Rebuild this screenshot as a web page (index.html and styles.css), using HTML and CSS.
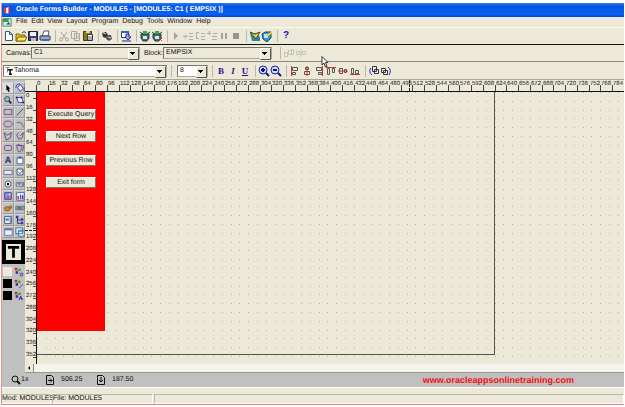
FILE: index.html
```html
<!DOCTYPE html>
<html lang="en">
<head>
    <meta charset="utf-8">
    <title>Oracle Forms Builder - MODULE5</title>
    <link rel="stylesheet" href="styles.css">
</head>
<body>
<div class="window">
    <header class="titlebar">
        <svg class="icon" viewBox="0 0 12 12"><path d="M2 4l4-2v8H3z" fill="#e33"/><path d="M5 4l3-2v8H5z" fill="#fff"/><path d="M8 2l2 3v5H8z" fill="#c22"/></svg>
        <h1>Oracle Forms Builder - MODULE5 - [MODULE5: C1 ( EMPSIX )]</h1>
    </header>

    <nav class="menubar">
        <svg class="icon" viewBox="0 0 12 12"><path d="M1 2h10v9H1z" fill="#dfe8d8" stroke="#286"/><path d="M1 2h7v4H1z" fill="#3a9a60"/><path d="M5 9l3-3 2 3z" fill="#246"/></svg>
        <a href="#">File</a>
        <a href="#">Edit</a>
        <a href="#">View</a>
        <a href="#">Layout</a>
        <a href="#">Program</a>
        <a href="#">Debug</a>
        <a href="#">Tools</a>
        <a href="#">Window</a>
        <a href="#">Help</a>
    </nav>

    <div class="toolbar main-tools">
        <button aria-label="New"><svg viewBox="0 0 12 12"><path d="M2.500 1.500h4l3 3v6h-7z" fill="#fff" stroke="#345a8c"/><path d="M6.500 1.500v3h3" fill="none" stroke="#345a8c"/></svg></button>
        <button aria-label="Open"><svg viewBox="0 0 12 12"><path d="M1 4h3l1 1h5v6H1z" fill="#e8c020" stroke="#776010"/><path d="M3 7h9l-2 4H1z" fill="#ffe860" stroke="#776010"/><path d="M7 3q2-3 4 0" fill="none" stroke="#333"/></svg></button>
        <button aria-label="Save"><svg viewBox="0 0 12 12"><path d="M1.500 1.500h9v9h-9z" fill="#3a3f80" stroke="#223"/><path d="M3 2h6v4H3z" fill="#eef"/><path d="M4 8h5v3H4z" fill="#b8bcd8"/></svg></button>
        <button aria-label="Print"><svg viewBox="0 0 12 12"><path d="M3 6l2-5h5l-1 5z" fill="#fff" stroke="#557"/><path d="M1 6h10v4H1z" fill="#9aa9cc" stroke="#345"/><path d="M3 9h7v2H3z" fill="#46c"/></svg></button>
        <span class="sep"></span>
        <button aria-label="Cut"><svg viewBox="0 0 12 12"><path d="M3 2l5 7M9 2L4 9" stroke="#aaa89c" fill="none"/><circle cx="3" cy="9.500" r="1.500" fill="none" stroke="#aaa89c"/><circle cx="9" cy="9.500" r="1.500" fill="none" stroke="#aaa89c"/></svg></button>
        <button aria-label="Copy"><svg viewBox="0 0 12 12"><path d="M1.500 1.500h5v7h-5zM4.500 3.500h5v7h-5z" fill="#eeecdf" stroke="#aaa89c"/><path d="M6 6h3M6 8h3" stroke="#aaa89c"/></svg></button>
        <button aria-label="Paste"><svg viewBox="0 0 12 12"><path d="M1.500 1.500h8v9h-8z" fill="#8c7a22" stroke="#443c10"/><path d="M4 1h4v2H4z" fill="#dd8"/><path d="M5.500 4.500h5v6h-5z" fill="#fff" stroke="#335"/><path d="M6 7h4M6 9h4" stroke="#557"/></svg></button>
        <span class="sep"></span>
        <button aria-label="Connect"><svg viewBox="0 0 12 12"><path d="M1 3l4-1 2 3-2 3-3-1z" fill="#333"/><path d="M6 5l4 0 1 4-3 2-3-2z" fill="#555"/><path d="M2 3l3 1M7 7l3 1" stroke="#ccc"/></svg></button>
        <span class="sep"></span>
        <button aria-label="Object Navigator"><svg viewBox="0 0 12 12"><path d="M1.500 1.500h7v6h-7z" fill="#fff" stroke="#247"/><path d="M1 1h8v2H1z" fill="#36a"/><path d="M6 4h3v3h2l-3 3-3-3h1z" fill="#9af" stroke="#229"/><path d="M2 11h9" stroke="#229"/></svg></button>
        <span class="sep"></span>
        <button aria-label="Run Form"><svg viewBox="0 0 12 12"><path d="M2 4h8v4l-2 3H4L2 8z" fill="#456f78" stroke="#243b44"/><path d="M1 2l3 2M11 2L8 4" stroke="#243b44"/><path d="M4 6h4v3H4z" fill="#d8e8e8"/><path d="M4 1h4v3H4z" fill="#2fae4a"/></svg></button>
        <button aria-label="Run Form Debug"><svg viewBox="0 0 12 12"><path d="M2 4h8v4l-2 3H4L2 8z" fill="#456f78" stroke="#243b44"/><path d="M1 2l3 2M11 2L8 4" stroke="#243b44"/><path d="M4 6h4v3H4z" fill="#d8e8e8"/><path d="M4 1h4v3H4z" fill="#2fae4a"/><path d="M8 8l3 3M11 8l-3 3" stroke="#d33"/></svg></button>
        <span class="sep"></span>
        <button aria-label="Go"><svg viewBox="0 0 12 12"><path d="M4 2l4 4-4 4z" fill="#a5a398"/></svg></button>
        <button aria-label="Step Into"><svg viewBox="0 0 12 12"><path d="M1 6.500h4M3 4.500l2 2-2 2M7 3.500h4M7 6.500h4M7 9.500h4" stroke="#b0aea2" fill="none"/></svg></button>
        <button aria-label="Step Over"><svg viewBox="0 0 12 12"><path d="M5 2.500H2.500v6H5M7 3.500h4M7 6.500h4M7 9.500h4" stroke="#b0aea2" fill="none"/></svg></button>
        <button aria-label="Step Out"><svg viewBox="0 0 12 12"><path d="M1 3.500h4M3.500 1v4M7 3.500h4M6 6.500h5M6 9.500h5" stroke="#b0aea2" fill="none"/></svg></button>
        <button aria-label="Pause"><svg viewBox="0 0 12 12"><path d="M3 3h2v6H3zM7 3h2v6H7z" fill="#a5a398"/></svg></button>
        <button aria-label="Stop"><svg viewBox="0 0 12 12"><path d="M3 3h6v6H3z" fill="#98968c"/></svg></button>
        <span class="sep"></span>
        <button aria-label="Layout Wizard"><svg viewBox="0 0 12 12"><path d="M1 3h6l4 4v4H3z" fill="#2a8a9a"/><path d="M1 2l5 2 5-2-4 7z" fill="#e8d030" stroke="#443"/><path d="M8 7h3v3H8z" fill="#37c"/></svg></button>
        <button aria-label="Data Block Wizard"><svg viewBox="0 0 12 12"><path d="M1 4l3-2h6v6l-4 4-4-3z" fill="#3a92c8" stroke="#146"/><path d="M3 4h4v4H3z" fill="#bdf"/><path d="M6 6l5-4" stroke="#ec3" stroke-width="2"/></svg></button>
        <span class="sep"></span>
        <button class="help" aria-label="Help">?</button>
    </div>

    <div class="toolbar canvas-bar">
        <label for="canvas">Canvas:</label>
        <span class="combo wide"><select id="canvas"><option>C1</option></select></span>
        <label for="block">Block:</label>
        <span class="combo wide"><select id="block"><option>EMPSIX</option></select></span>
        <span class="sep"></span>
        <button aria-label="Associate Prompt"><svg viewBox="0 0 12 12"><path d="M1.500 5.500h3v4h-3zM5.500 3.500h3v4h-3zM8.500 2.500h2v5h-2z" fill="none" stroke="#c4c2b5"/></svg></button>
        <button aria-label="Update Layout"><svg viewBox="0 0 12 12"><path d="M1.500 4.500h3v3h-3zM7.500 4.500h3v3h-3zM6 2v8" fill="none" stroke="#c4c2b5"/></svg></button>
    </div>

    <div class="toolbar font-bar">
        <span class="combo white font-name"><svg viewBox="0 0 12 12"><path d="M1 2h6M4 2v6M3 8h2" stroke="#777" fill="none"/><path d="M4 5h7M7.500 5v6M6 11h4" stroke="#111" stroke-width="2" fill="none"/></svg><select aria-label="Font name"><option>Tahoma</option></select></span>
        <span class="sep"></span>
        <span class="combo white font-size"><select aria-label="Font size"><option>8</option></select></span>
        <span class="sep"></span>
        <button class="letter"><b>B</b></button>
        <button class="letter"><i>I</i></button>
        <button class="letter"><u>U</u></button>
        <span class="sep"></span>
        <button aria-label="Zoom In"><svg viewBox="0 0 12 12"><circle cx="5" cy="5" r="4" fill="#cde" stroke="#22a"/><path d="M3 5h4M5 3v4" stroke="#118" stroke-width="2"/><path d="M8 8l3 3" stroke="#118" stroke-width="2"/></svg></button>
        <button aria-label="Zoom Out"><svg viewBox="0 0 12 12"><circle cx="5" cy="5" r="4" fill="#cde" stroke="#22a"/><path d="M3 5h4" stroke="#118" stroke-width="2"/><path d="M8 8l3 3" stroke="#118" stroke-width="2"/></svg></button>
        <span class="sep"></span>
        <button aria-label="Align Left"><svg viewBox="0 0 12 12"><path d="M2.500 1v10" stroke="#c33"/><path d="M3.500 2.500h5v3h-5zM3.500 7.500h3v2h-3z" fill="none" stroke="#555"/></svg></button>
        <button aria-label="Align Center"><svg viewBox="0 0 12 12"><path d="M6 1v10" stroke="#c33"/><path d="M4.500 2.500h3v2h-3zM3.500 6.500h5v3h-5z" fill="none" stroke="#744"/></svg></button>
        <button aria-label="Align Right"><svg viewBox="0 0 12 12"><path d="M9.500 1v10" stroke="#c33"/><path d="M3.500 2.500h5v3h-5zM5.500 7.500h3v2h-3z" fill="none" stroke="#555"/></svg></button>
        <button aria-label="Align Top"><svg viewBox="0 0 12 12"><path d="M1 2.500h10" stroke="#c33"/><path d="M2.500 3.500h2v6h-2zM7.500 3.500h2v4h-2z" fill="none" stroke="#555"/></svg></button>
        <button aria-label="Align Middle"><svg viewBox="0 0 12 12"><path d="M1 6h10" stroke="#c33"/><path d="M2.500 3.500h3v5h-3zM7.500 4.500h2v3h-2z" fill="none" stroke="#744"/></svg></button>
        <button aria-label="Align Bottom"><svg viewBox="0 0 12 12"><path d="M1 9.500h10" stroke="#c33"/><path d="M2.500 3.500h2v5h-2zM6.500 5.500h3v3h-3z" fill="none" stroke="#555"/></svg></button>
        <span class="sep"></span>
        <button aria-label="Bring to Front"><svg viewBox="0 0 12 12"><path d="M4.500 1.500h4v5h-4zM6.500 4.500h4v4h-4z" fill="#eee" stroke="#333"/><path d="M3 3q-3 4 1 7" fill="none" stroke="#22c"/></svg></button>
        <button aria-label="Send to Back"><svg viewBox="0 0 12 12"><path d="M1.500 3.500h4v4h-4zM3.500 5.500h4v4h-4z" fill="#eee" stroke="#333"/><path d="M8 2q4 3 1 8" fill="none" stroke="#22c"/></svg></button>
    </div>

    <main class="workspace">
        <aside class="palette">
            <div class="tools">
                <button class="active" aria-label="Select"><svg viewBox="0 0 12 12"><path d="M4 2l5 5H7l1 3-1 1-2-3-1 1z" fill="#000"/></svg></button>
                <button aria-label="Rotate"><svg viewBox="0 0 12 12"><path d="M3 5l4-3 3 5-4 3z" fill="#eef" stroke="#33b"/><path d="M1 6q0-5 5-5M11 5v5" fill="none" stroke="#33b"/></svg></button>
                <button aria-label="Magnify"><svg viewBox="0 0 12 12"><circle cx="5" cy="5" r="3" fill="#9bb" stroke="#335"/><path d="M7 7l3 3" stroke="#224" stroke-width="2"/></svg></button>
                <button aria-label="Reshape"><svg viewBox="0 0 12 12"><path d="M2 3h6l2 6H4z" fill="#eef" stroke="#33a"/><path d="M1 2h2v2H1zM7 2h2v2H7zM9 8h2v2H9z" fill="#116"/></svg></button>
                <button aria-label="Rectangle"><svg viewBox="0 0 12 12"><path d="M1.500 3h9v6h-9z" fill="none" stroke="#744080"/></svg></button>
                <button aria-label="Line"><svg viewBox="0 0 12 12"><path d="M2 10l8-8" stroke="#336" fill="none"/></svg></button>
                <button aria-label="Ellipse"><svg viewBox="0 0 12 12"><ellipse cx="6" cy="6" rx="5" ry="3.500" fill="none" stroke="#744080"/></svg></button>
                <button aria-label="Arc"><svg viewBox="0 0 12 12"><path d="M2 4q7-1 8 6" fill="none" stroke="#744080"/></svg></button>
                <button aria-label="Polygon"><svg viewBox="0 0 12 12"><path d="M1 2l4 3 5-3-1 6-5 3z" fill="none" stroke="#623a78"/></svg></button>
                <button aria-label="Polyline"><svg viewBox="0 0 12 12"><path d="M4 2L2 5l3 5 4-2 1-6-4 4" fill="none" stroke="#623a78"/></svg></button>
                <button aria-label="Rounded Rectangle"><svg viewBox="0 0 12 12"><rect x="1.500" y="3" width="9" height="6" rx="2" fill="none" stroke="#744080"/></svg></button>
                <button aria-label="Freehand"><svg viewBox="0 0 12 12"><path d="M1 3q4-2 6 0t0 6-4-1 2-5 5 0-1 7" fill="none" stroke="#623a78"/></svg></button>
                <button class="text-tool" aria-label="Text">A</button>
                <button aria-label="Text Item"><svg viewBox="0 0 12 12"><path d="M2.500 3.500h7v7h-7z" fill="#fff" stroke="#2858b0"/><path d="M4 2h4v2H4z" fill="#2858b0"/></svg></button>
                <button aria-label="Button"><svg viewBox="0 0 12 12"><path d="M1 4h10v5H1z" fill="#e8e8f4" stroke="#668"/></svg></button>
                <button aria-label="Check Box"><svg viewBox="0 0 12 12"><path d="M2.500 2.500h7v7h-7z" fill="#fff" stroke="#246"/><path d="M4 6l2 2 3-4" fill="none" stroke="#147"/></svg></button>
                <button aria-label="Radio Button"><svg viewBox="0 0 12 12"><circle cx="6" cy="6" r="3.500" fill="#fff" stroke="#357"/><circle cx="6" cy="6" r="1.500" fill="#000"/></svg></button>
                <button aria-label="Text Field"><svg viewBox="0 0 12 12"><path d="M1.500 4.500h9v4h-9z" fill="#fff" stroke="#457"/><path d="M3 6h4" stroke="#000"/><path d="M8 5h2v3H8z" fill="#679"/></svg></button>
                <button aria-label="Image Item"><svg viewBox="0 0 12 12"><path d="M2 2h8v8H2z" fill="#89e" stroke="#33a"/><path d="M3 9l3-4 3 4z" fill="#c56"/><path d="M7 3h2v2H7z" fill="#fe6"/></svg></button>
                <button aria-label="Chart Item"><svg viewBox="0 0 12 12"><path d="M2 2h9v9H2z" fill="#fff" stroke="#35a"/><path d="M3 6h2v4H3z" fill="#c33"/><path d="M6 4h1v6H6zM8 5h2v5H8z" fill="#33c"/></svg></button>
                <button aria-label="Bean Area"><svg viewBox="0 0 12 12"><ellipse cx="5" cy="7" rx="3.500" ry="2.500" fill="#d88a20" stroke="#753"/><circle cx="9" cy="5" r="1.500" fill="#d88a20" stroke="#753"/></svg></button>
                <button aria-label="Display Item"><svg viewBox="0 0 12 12"><path d="M1 4h10v4H1z" fill="#9ab" stroke="#567"/><path d="M3 6h5" stroke="#123"/></svg></button>
                <button aria-label="List Item"><svg viewBox="0 0 12 12"><path d="M2 2h8v8H2z" fill="#fff" stroke="#246"/><path d="M3 4h4v3H3z" fill="#48c"/><path d="M8 3h1v6H8z" fill="#357"/></svg></button>
                <button aria-label="Tree Item"><svg viewBox="0 0 12 12"><path d="M3 3v7h4M3 6h4" fill="none" stroke="#224"/><path d="M1 1h3v3H1zM7 4h3v3H7zM7 8h3v3H7z" fill="#33c"/></svg></button>
                <button aria-label="Tab Canvas"><svg viewBox="0 0 12 12"><path d="M2 2h9v8H2z" fill="#eef" stroke="#579"/><path d="M2 2h9v2H2z" fill="#57a"/></svg></button>
                <button aria-label="Stacked Canvas"><svg viewBox="0 0 12 12"><path d="M1 1h8v7H1zM4 4h7v7H4z" fill="#def" stroke="#369"/><path d="M4 4h7v2H4z" fill="#69b"/></svg></button>
            </div>
            <div class="preview"><svg viewBox="0 0 16 16"><path d="M2 3h12M8 3v11" fill="none" stroke="#000" stroke-width="3"/></svg></div>
            <div class="tools colours">
                <span class="swatch light"></span>
                <button aria-label="Fill Color"><svg viewBox="0 0 12 12"><path d="M1 1h3v3H1z" fill="#d22"/><path d="M5 2h3v3H5z" fill="#2a4"/><path d="M2 5h3v3H2z" fill="#22d"/><path d="M5 5h2v2H5z" fill="#ec2"/><path d="M7.500 7.500h3v3h-3z" fill="none" stroke="#539"/></svg></button>
                <span class="swatch"></span>
                <button aria-label="Line Color"><svg viewBox="0 0 12 12"><path d="M1 1h3v3H1z" fill="#d22"/><path d="M5 2h3v3H5z" fill="#2a4"/><path d="M2 5h3v3H2z" fill="#22d"/><path d="M5 5h2v2H5z" fill="#ec2"/><path d="M6 11l5-5" stroke="#539"/></svg></button>
                <span class="swatch"></span>
                <button aria-label="Text Color"><svg viewBox="0 0 12 12"><path d="M1 1h3v3H1z" fill="#d22"/><path d="M5 2h3v3H5z" fill="#2a4"/><path d="M2 5h3v3H2z" fill="#22d"/><path d="M5 5h2v2H5z" fill="#ec2"/><path d="M6 11l2-5 2 5M7 9h3" fill="none" stroke="#319"/></svg></button>
            </div>
        </aside>
        <div class="ruler-top" id="rulerTop"><i class="marker"></i></div>
        <div class="ruler-left" id="rulerLeft"><i class="marker"></i></div>
        <section class="layout-area">
            <svg class="dots">
                <defs>
                    <pattern id="grid" width="44" height="44" patternUnits="userSpaceOnUse">
                        <path d="M0 0h1M9 0h1M18 0h1M26 0h1M35 0h1M0 9h1M9 9h1M18 9h1M26 9h1M35 9h1M0 18h1M9 18h1M18 18h1M26 18h1M35 18h1M0 26h1M9 26h1M18 26h1M26 26h1M35 26h1M0 35h1M9 35h1M18 35h1M26 35h1M35 35h1" transform="translate(0 .5)" stroke="#b5b2a4"/>
                    </pattern>
                </defs>
                <rect width="100%" height="100%" fill="url(#grid)"/>
            </svg>
            <div class="form-canvas">
                <div class="red-panel">
                    <button class="execute">Execute Query</button>
                    <button class="next">Next Row</button>
                    <button class="previous">Previous Row</button>
                    <button class="exit">Exit form</button>
                </div>
            </div>
        </section>
        <div class="hscroll"><button aria-label="Scroll left"><svg viewBox="0 0 8 8"><path d="M5 2v4L3 4z" fill="#000"/></svg></button></div>
    </main>

    <div class="coords">
        <svg viewBox="0 0 10 10"><circle cx="4" cy="4" r="3" fill="none" stroke="#111"/><path d="M6 6l3 3" stroke="#111" stroke-width="2"/></svg>
        <span class="zoom">1x</span>
        <svg viewBox="0 0 10 10"><path d="M1.500.5h5l2 2v7h-7z" fill="none" stroke="#111"/><path d="M3 5.500h4M5 3.500l2 2-2 2" fill="none" stroke="#111"/></svg>
        <span class="pos">506.25</span>
        <svg viewBox="0 0 10 10"><path d="M1.500.5h5l2 2v7h-7z" fill="none" stroke="#111"/><path d="M5 2v5M3 5l2 2 2-2" fill="none" stroke="#111"/></svg>
        <span class="pos">187.50</span>
        <a class="site" href="#">www.oracleappsonlinetraining.com</a>
    </div>

    <footer class="status">
        <span class="mod">Mod: MODULE5</span>
        <span class="file">File: MODULE5</span>
        <span class="rest"></span>
    </footer>

    <svg class="pointer" viewBox="0 0 8 12"><path d="M1 .5v8.500l2-2 1.500 4 1.500-.5-1.500-4H7z" fill="#fff" stroke="#333"/></svg>
</div>

<script>
    // one label for every 16 units
    function fillRuler(id, count) {
        var ruler = document.getElementById(id);
        var marker = ruler.querySelector(".marker");
        for (var n = 0; n < count; n++) {
            var mark = document.createElement("span");
            mark.textContent = n * 16;
            ruler.insertBefore(mark, marker);
        }
    }
    // four marks take 47px
    var room = document.getElementById("rulerTop").clientWidth - 11;
    fillRuler("rulerTop", Math.floor(room * 4 / 47));
    fillRuler("rulerLeft", 23);
</script>
</body>
</html>
```
FILE: styles.css
```css
* {
    box-sizing: border-box;
}
body {
    margin: 0;
    background: #fff;
    font-family: "Liberation Sans", Arial, sans-serif;
    font-size: 7px;
    line-height: 8px;
    color: #111;
    text-rendering: geometricPrecision;
}
button, select {
    font: inherit;
    color: inherit;
    text-rendering: inherit;
    margin: 0;
    padding: 0;
    border: none;
    border-radius: 0;
    background: none;
    appearance: none;
}
a {
    color: inherit;
    text-decoration: none;
}
svg {
    display: block;
}
.window {
    position: relative;
    display: flex;
    flex-direction: column;
    height: 100vh;
    padding: 3px 1px 0 1px;
    border-bottom: 2px solid #fff;
    overflow: hidden;
}
.window > * {
    flex-shrink: 0;
    border-left: 1px solid #e89090;
}

/* title and menu */
.titlebar {
    display: flex;
    align-items: center;
    gap: 4px;
    height: 14px;
    background: linear-gradient(#2a7cf0, #0355e0 25%, #0562f4 80%, #0345c8);
}
.titlebar h1 {
    margin: 0;
    font-size: 7px;
    line-height: 10px;
    color: #fff;
    white-space: nowrap;
}
.icon {
    width: 10px;
    height: 10px;
}
.menubar {
    display: flex;
    align-items: center;
    gap: 4px;
    height: 11px;
    background: #ece9d8;
    border-bottom: 1px solid #f8f7f0;
}

/* toolbars */
.toolbar {
    display: flex;
    align-items: center;
    background: #ece9d8;
}
.toolbar button, .toolbar button svg {
    width: 12px;
    height: 12px;
}
.sep {
    width: 7px;
    height: 12px;
    border-left: 1px solid #bab7a8;
    margin-left: 4px;
    margin-right: -4px;
}
.main-tools {
    height: 17px;
    border-bottom: 1px solid #111;
    padding-left: 1px;
}
.toolbar .help {
    font-size: 10px;
    font-weight: bold;
    color: #1818c0;
}
.canvas-bar {
    height: 17px;
    border-bottom: 1px solid #8a887c;
    padding-left: 4px;
}
.canvas-bar label {
    width: 25px;
    padding-top: 2px;
}
.canvas-bar .wide + label {
    width: 19px;
}
.combo {
    position: relative;
    display: flex;
    align-items: center;
    height: 12px;
    border: 1px solid #aca899;
    border-top-color: #77756a;
    border-left-color: #77756a;
}
.combo select {
    flex: 1;
    height: 10px;
    padding-left: 2px;
    line-height: 8px;
}
/* arrow button of the drop-down */
.combo::after {
    content: "";
    position: absolute;
    right: 0;
    top: 0;
    width: 9px;
    height: 10px;
    border: 1px solid #fff;
    border-right-color: #555;
    border-bottom-color: #555;
    background: linear-gradient(#000, #000) 1px 3px / 5px 1px no-repeat,
        linear-gradient(#000, #000) 2px 4px / 3px 1px no-repeat,
        linear-gradient(#000, #000) 3px 5px / 1px 1px no-repeat, #ece9d8;
    pointer-events: none;
}
.wide {
    width: 109px;
    margin-right: 4px;
}
.wide + .sep {
    margin: 0 -4px 0 4px;
}
.white {
    background: #fff;
}
.font-bar {
    height: 18px;
    border-bottom: 1px solid #aca899;
    padding-left: 1px;
}
.font-name {
    width: 164px;
}
.font-name svg {
    width: 10px;
    height: 9px;
}
.font-name select {
    padding-left: 0;
}
.font-size {
    width: 31px;
    margin-left: 3px;
}
.letter {
    font-family: "Liberation Serif", serif;
    font-size: 9px;
    font-weight: bold;
    color: #33108c;
}

/* editor */
.workspace {
    flex: 1 1 0;
    min-height: 0;
    display: grid;
    grid-template-columns: 23px 12px 1fr;
    grid-template-rows: 12px 1fr 9px;
    background: #ece9d8;
}
.palette {
    grid-row: 1 / 4;
    background: #c0c0c0;
    padding-top: 2px;
}
.tools {
    display: grid;
    grid-template-columns: 12px 11px;
    grid-auto-rows: 12px;
}
.tools button {
    border: 1px solid #d8d8d8;
    border-right-color: #999;
    border-bottom-color: #999;
}
.tools svg {
    width: 10px;
    height: 10px;
}
.tools .active {
    background: #dedede;
}
.tools .text-tool {
    font-size: 9px;
    font-weight: bold;
    color: #2c2c80;
}
.preview {
    height: 24px;
    margin-top: 2px;
    padding: 4px;
    background: #000;
}
.preview svg {
    width: 100%;
    height: 100%;
    background: #ece9d8;
}
.colours {
    margin-top: 2px;
}
.colours button {
    border: none;
}
.swatch {
    width: 9px;
    height: 9px;
    background: #000;
    margin: 1px;
}
.swatch.light {
    background: #ece9d8;
}
.ruler-top, .ruler-left {
    position: relative;
    font-size: 6px;
}
.ruler-top {
    grid-column: 2 / 4;
    display: flex;
    min-width: 0;
    padding-left: 11px;
    border-bottom: 1px solid #111;
}
.ruler-top span {
    flex: none;
    width: 12px;
    padding-left: 1px;
    background: linear-gradient(#444, #444) left bottom / 1px 6px no-repeat;
}
.ruler-top span:nth-child(4n) {
    width: 11px;
}
.ruler-left {
    border-right: 1px solid #111;
    min-height: 0;
}
.ruler-left span {
    display: block;
    height: 12px;
    padding-left: 1px;
    background: linear-gradient(#444, #444) right 6px / 3px 1px no-repeat;
}
.ruler-left span:nth-child(4n) {
    height: 11px;
}
/* mouse position on the rulers */
.ruler-top .marker {
    position: absolute;
    left: 384px;
    height: 11px;
    border-left: 1px dashed #222;
}
.ruler-left .marker {
    position: absolute;
    top: 138px;
    width: 11px;
    border-top: 1px dashed #222;
}
.layout-area {
    position: relative;
    min-width: 0;
    overflow: hidden;
}
.dots {
    position: absolute;
    width: 100%;
    height: 100%;
}
.form-canvas {
    position: relative;
    width: 458px;
    height: 263px;
    border-right: 1px solid #55534a;
    border-bottom: 1px solid #55534a;
}
.red-panel {
    position: relative;
    width: 68px;
    height: 239px;
    background: #f00;
}
.red-panel button {
    position: absolute;
    left: 9px;
    width: 50px;
    height: 11px;
    background: #ece9d8;
    border: 1px solid #fff;
    border-right-color: #77756a;
    border-bottom-color: #77756a;
    white-space: nowrap;
}
.execute { top: 17px; }
.next { top: 39px; }
.previous { top: 63px; }
.exit { top: 85px; }
.hscroll {
    grid-column: 2 / 4;
    background: #f5f4ec;
    border-bottom: 1px solid #9a988c;
}
.hscroll button {
    width: 9px;
    height: 8px;
    background: #ece9d8;
    border-right: 1px solid #888;
}

/* bottom bars */
.coords {
    display: flex;
    align-items: center;
    height: 15px;
    padding-left: 9px;
    background: #c0c0c0;
    border-bottom: 1px solid #fff;
}
.coords svg {
    width: 10px;
    height: 10px;
}
.zoom {
    width: 24px;
}
.pos {
    width: 41px;
    padding-left: 6px;
}
.site {
    margin-left: auto;
    margin-right: 50px;
    font-size: 9px;
    line-height: 10px;
    font-weight: bold;
    color: #f01010;
}
.status {
    display: flex;
    gap: 1px;
    height: 17px;
    padding-top: 6px;
    background: #ece9d8;
    border-bottom: 1px solid #e88080;
}
.status span {
    border: 1px solid #fff;
    border-top-color: #bab7a8;
    border-left-color: #bab7a8;
}
.status .mod {
    width: 49px;
    border-left: none;
    white-space: nowrap;
}
.file {
    width: 101px;
}
.rest {
    flex: 1;
}

.window > .pointer {
    position: absolute;
    left: 321px;
    top: 56px;
    width: 8px;
    height: 12px;
    border: none;
}
```
